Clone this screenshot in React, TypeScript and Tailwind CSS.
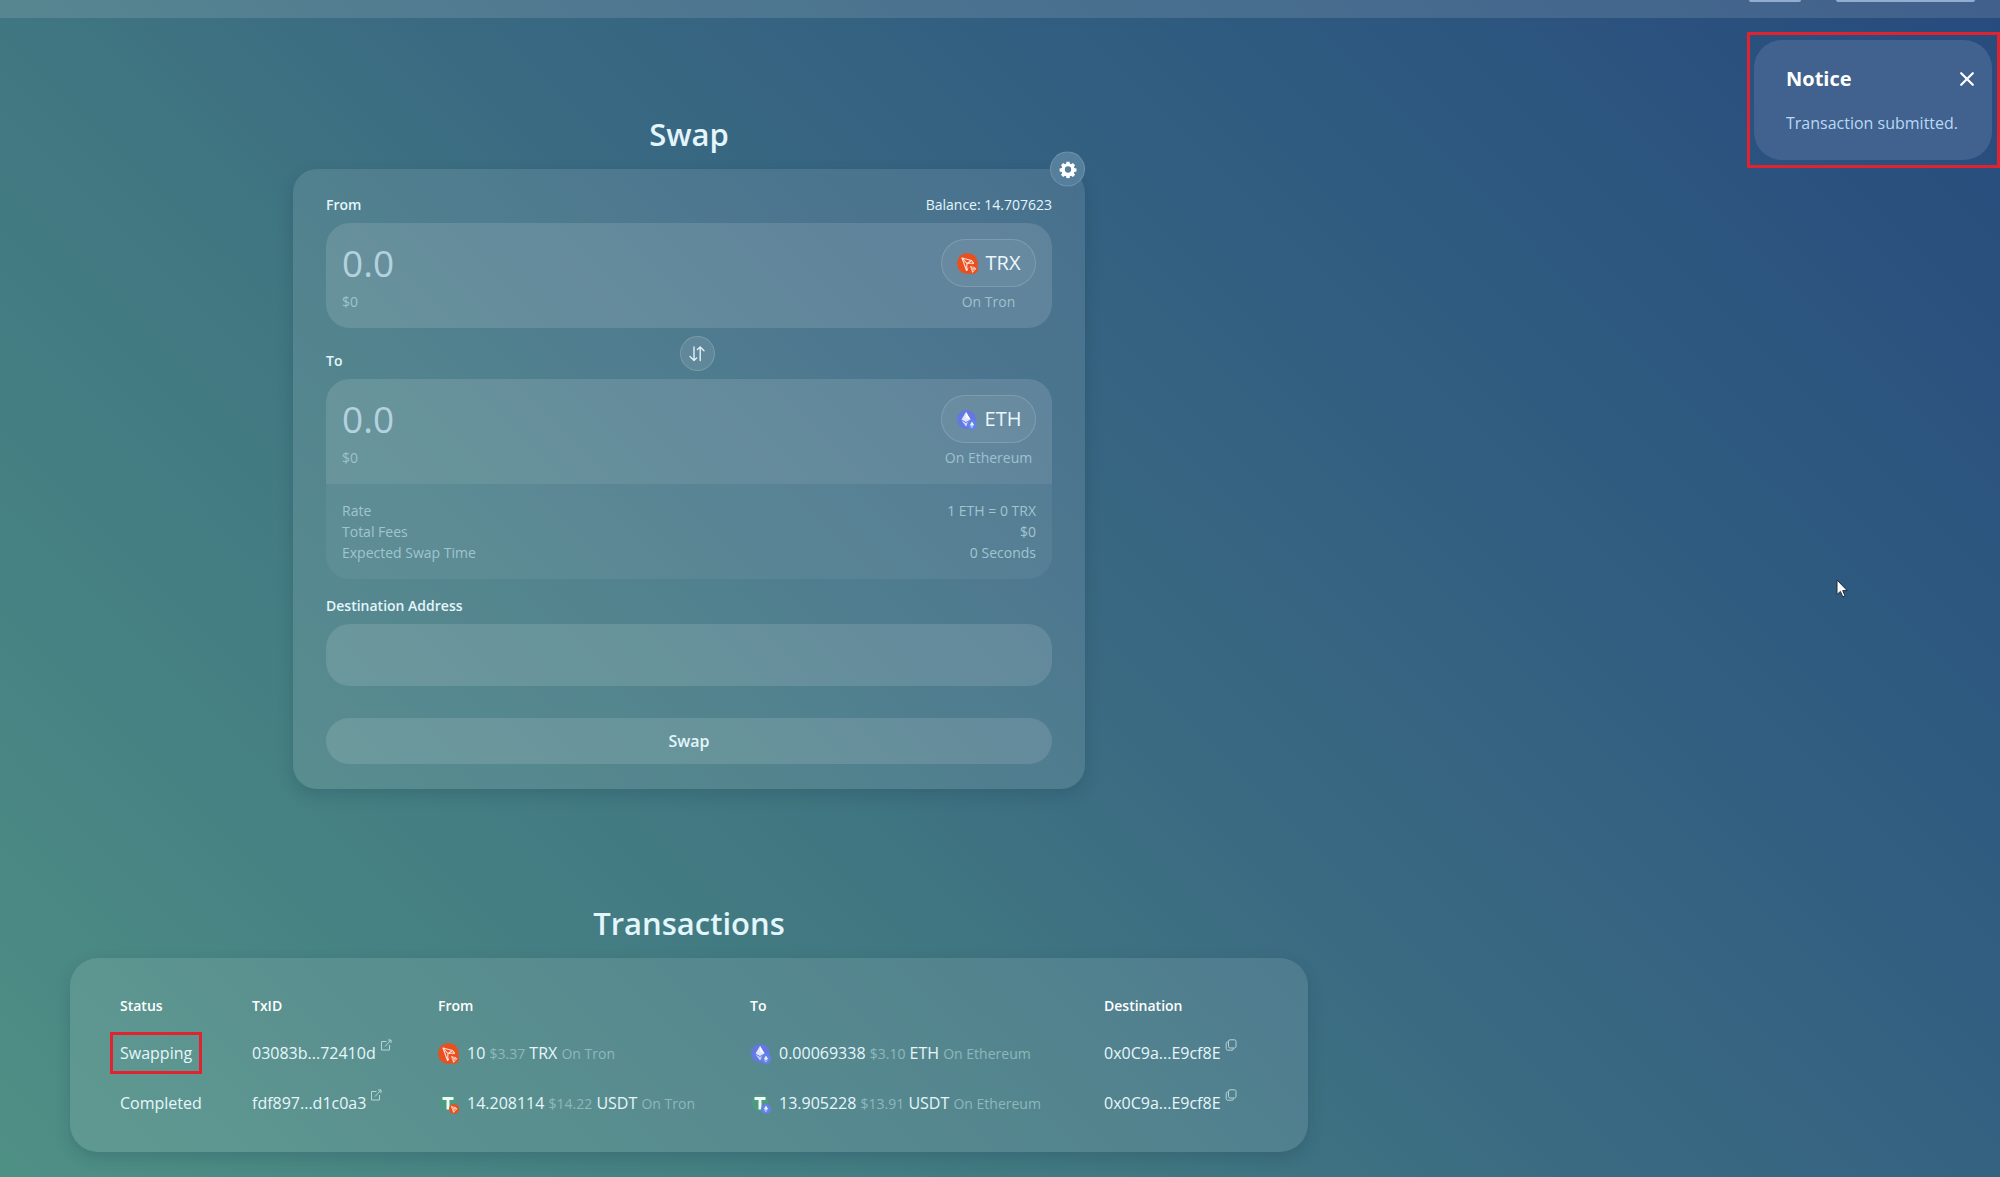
import React from "react";

const transactions = [
    {
        status: "Swapping",
        highlighted: true,
        txid: "03083b...72410d",
        from: { token: "TRX", chain: "Tron", amount: "10", usd: "$3.37" },
        to: { token: "ETH", chain: "Ethereum", amount: "0.00069338", usd: "$3.10" },
        destination: "0x0C9a...E9cf8E",
    },
    {
        status: "Completed",
        highlighted: false,
        txid: "fdf897...d1c0a3",
        from: { token: "USDT", chain: "Tron", amount: "14.208114", usd: "$14.22" },
        to: { token: "USDT", chain: "Ethereum", amount: "13.905228", usd: "$13.91" },
        destination: "0x0C9a...E9cf8E",
    },
];

const details = [
    { label: "Rate", value: "1 ETH = 0 TRX" },
    { label: "Total Fees", value: "$0" },
    { label: "Expected Swap Time", value: "0 Seconds" },
];

const TronMark = () => (
    <g fill="none" stroke="#ffe1d8" strokeLinejoin="round">
        <path d="M10 10 L29 15 L33 20 L19 35 Z" />
        <path d="M10 10 L20 21 L33 20 M20 21 L19 35 M20 21 L29 15" />
    </g>
);

const EtherMark = () => (
    <g>
        <path d="M20 6 L29 21 L20 26 L11 21 Z" fill="#dfe6ff" />
        <path d="M20 6 L29 21 L20 17 Z" fill="#ffffff" />
        <path d="M11 23 L20 28 L29 23 L20 35 Z" fill="#c9d5ff" />
    </g>
);

const TokenIcon = ({ token, chain }: { token: string; chain: string }) => (
    <svg viewBox="0 0 42 42" className="size-[21px] shrink-0" aria-hidden="true">
        {token === "TRX" && (
            <>
                <circle cx="21" cy="21" r="21" fill="#e9501f" />
                <g strokeWidth="2.2">
                    <TronMark />
                </g>
            </>
        )}
        {token === "ETH" && (
            <>
                <circle cx="21" cy="21" r="19" fill="#6478e2" />
                <EtherMark />
            </>
        )}
        {token === "USDT" && (
            <>
                <circle cx="20" cy="20" r="17" fill="#4d9a80" />
                <path d="M9 8 H31 V14 H23 V33 H17 V14 H9 Z" fill="#eefaf6" />
            </>
        )}
        <circle cx="32" cy="32" r="10" fill={chain === "Tron" ? "#e9501f" : "#6283ea"} />
        <g transform="translate(22.5 22.5) scale(0.46)" strokeWidth="3.4">
            {chain === "Tron" ? <TronMark /> : <EtherMark />}
        </g>
    </svg>
);

const GearIcon = () => (
    <svg viewBox="0 0 24 24" className="size-[18px]" fill="#ffffff" aria-hidden="true">
        <path
            fillRule="evenodd"
            d="M10 1.5h4l.6 2.9 1.5.6 2.5-1.6 2.8 2.8-1.6 2.5.6 1.4 2.9.6v3.9l-2.9.6-.6 1.5 1.6 2.4-2.8 2.8-2.5-1.6-1.5.6-.6 2.9h-4l-.6-2.9-1.4-.6-2.5 1.6-2.8-2.8 1.6-2.4-.6-1.5-2.9-.6v-3.9l2.9-.6.6-1.4-1.6-2.5 2.8-2.8L8 5l1.4-.6zM12 7.8a4.2 4.2 0 1 0 0 8.4 4.2 4.2 0 0 0 0-8.4z"
        />
    </svg>
);

const FlipIcon = () => (
    <svg
        viewBox="0 0 18 18"
        className="size-[18px]"
        fill="none"
        stroke="#e2f1f8"
        strokeWidth="1.4"
        strokeLinecap="round"
        strokeLinejoin="round"
        aria-hidden="true"
    >
        <path d="M6 2V15.5M2 11.5L6 15.5L8.6 13" />
        <path d="M12.2 15.5V2M9.4 4.6L12.2 2L16 5.8" />
    </svg>
);

const ExternalIcon = () => (
    <svg viewBox="0 0 12 12" className="size-3" fill="none" stroke="currentColor" aria-hidden="true">
        <path d="M6.5 2.5H1.5V11H9.5V6M5 7.5L11 1M8 1H11V4" />
    </svg>
);

const CopyIcon = () => (
    <svg viewBox="0 0 12 12" className="size-3" fill="none" stroke="currentColor" aria-hidden="true">
        <rect x="3.5" y="0.8" width="7.5" height="8.2" rx="1.6" />
        <path d="M3.5 3H2.6Q1.2 3 1.2 4.4V9.6Q1.2 11.2 2.8 11.2H7Q8.4 11.2 8.4 9.8V9" />
    </svg>
);

const TokenField = ({
    id,
    token,
    chain,
    className,
}: {
    id: string;
    token: string;
    chain: string;
    className: string;
}) => (
    <div className={`flex items-start justify-between bg-white/12 px-4 py-4 ${className}`}>
        <div className="flex min-w-0 flex-1 flex-col gap-1">
            <input
                id={id}
                type="text"
                inputMode="decimal"
                placeholder="0.0"
                className="h-12 w-full bg-transparent text-[37px] text-white outline-none placeholder:text-[#b3d2de]"
            />
            <span className="text-sm leading-[21px] text-[#9fc1ce]">$0</span>
        </div>
        <div className="flex flex-col items-center gap-1">
            <button
                type="button"
                className="flex h-12 w-[95px] items-center justify-center gap-2 rounded-full border border-white/15 bg-white/5 text-xl text-[#eaf8fd]"
            >
                <TokenIcon token={token} chain={chain} />
                {token}
            </button>
            <span className="text-sm leading-[21px] text-[#9fc1ce]">On {chain}</span>
        </div>
    </div>
);

const SwapCard = () => (
    <section className="flex w-full max-w-[792px] flex-col items-center">
        <h1 className="text-[31px] font-semibold leading-10 text-[#e2f6fc]">Swap</h1>
        <form className="relative mt-[15px] w-full rounded-3xl bg-white/10 px-[33px] py-[25px] shadow-[0_6px_16px_rgba(20,50,70,0.2)]">
            <button
                type="button"
                aria-label="Settings"
                className="absolute right-0 top-0 flex size-[35px] -translate-y-1/2 items-center justify-center rounded-full border border-white/15 bg-[#557f9c]"
            >
                <GearIcon />
            </button>

            <div className="mb-2 flex items-center justify-between text-sm leading-[21px] text-[#e2f6fc]">
                <label htmlFor="from-amount" className="font-semibold">
                    From
                </label>
                <span>Balance: 14.707623</span>
            </div>
            <TokenField id="from-amount" token="TRX" chain="Tron" className="rounded-3xl" />

            <div className="my-2 flex items-end justify-between">
                <label htmlFor="to-amount" className="text-sm font-semibold leading-[21px] text-[#e2f6fc]">
                    To
                </label>
                <button
                    type="button"
                    aria-label="Switch tokens"
                    className="flex size-[35px] items-center justify-center rounded-full border border-white/15 bg-white/10"
                >
                    <FlipIcon />
                </button>
                <span />
            </div>
            <TokenField id="to-amount" token="ETH" chain="Ethereum" className="rounded-t-3xl" />
            <dl className="rounded-b-3xl bg-white/5 p-4 text-sm leading-[21px] text-[#9fc6d0]">
                {details.map(({ label, value }) => (
                    <div key={label} className="flex justify-between">
                        <dt>{label}</dt>
                        <dd>{value}</dd>
                    </div>
                ))}
            </dl>

            <label
                htmlFor="destination"
                className="mb-2 mt-4 block text-sm font-semibold leading-[21px] text-[#e2f6fc]"
            >
                Destination Address
            </label>
            <input
                id="destination"
                type="text"
                className="h-[62px] w-full rounded-3xl bg-white/12 px-4 text-white outline-none"
            />
            <button
                type="button"
                className="mt-8 h-[46px] w-full rounded-3xl bg-white/12 font-semibold text-[#e2f6fc]"
            >
                Swap
            </button>
        </form>
    </section>
);

const TokenAmount = ({
    token,
    chain,
    amount,
    usd,
}: {
    token: string;
    chain: string;
    amount: string;
    usd: string;
}) => (
    <div className="flex items-center gap-2">
        <TokenIcon token={token} chain={chain} />
        <span>
            {amount} <span className="text-sm text-[#8fb8bd]">{usd}</span> {token}{" "}
            <span className="text-sm text-[#8fb8bd]">On {chain}</span>
        </span>
    </div>
);

const Transactions = () => (
    <section className="mt-[114px] flex w-full max-w-[1238px] flex-col items-center">
        <h2 className="text-[31px] font-semibold leading-10 text-[#e2f6fc]">Transactions</h2>
        <div className="mt-[15px] w-full rounded-[28px] bg-white/10 px-[50px] pb-6 pt-[26px] shadow-[0_6px_16px_rgba(20,50,70,0.2)]">
            <table className="w-full table-fixed text-left text-[#e6f7fb]">
                <thead>
                    <tr className="h-11 text-sm text-white">
                        <th className="w-[132px] font-semibold">Status</th>
                        <th className="w-[186px] font-semibold">TxID</th>
                        <th className="w-[312px] font-semibold">From</th>
                        <th className="w-[354px] font-semibold">To</th>
                        <th className="font-semibold">Destination</th>
                    </tr>
                </thead>
                <tbody>
                    {transactions.map((tx) => (
                        <tr key={tx.txid} className="h-[50px] whitespace-nowrap">
                            <td>
                                {tx.highlighted ? (
                                    <span className="inline-block leading-[22px] outline-[3px] outline-offset-[7px] outline-[#e0232e]">
                                        {tx.status}
                                    </span>
                                ) : (
                                    tx.status
                                )}
                            </td>
                            <td>
                                <a href="#" className="flex items-center gap-1">
                                    {tx.txid}
                                    <span className="mb-4 text-[#b5d5d8]">
                                        <ExternalIcon />
                                    </span>
                                </a>
                            </td>
                            <td>
                                <TokenAmount {...tx.from} />
                            </td>
                            <td>
                                <TokenAmount {...tx.to} />
                            </td>
                            <td>
                                <div className="flex items-center gap-1">
                                    {tx.destination}
                                    <button type="button" aria-label="Copy address" className="mb-4 text-[#b5d5d8]">
                                        <CopyIcon />
                                    </button>
                                </div>
                            </td>
                        </tr>
                    ))}
                </tbody>
            </table>
        </div>
    </section>
);

const Notice = () => (
    <div className="mt-[14px] w-[253px] border-[3px] border-[#e0232e] py-[5px] pl-1 pr-[5px]">
        <div role="status" className="rounded-[28px] bg-[#41628e] pb-[25px] pl-8 pr-[18px] pt-[25px]">
            <div className="flex items-center justify-between">
                <h3 className="text-xl font-bold leading-7 text-white">Notice</h3>
                <button type="button" aria-label="Close">
                    <svg
                        viewBox="0 0 14 14"
                        className="size-[14px]"
                        stroke="#ffffff"
                        strokeWidth="2.2"
                        strokeLinecap="round"
                        aria-hidden="true"
                    >
                        <path d="M1.2 1.2L12.8 12.8M12.8 1.2L1.2 12.8" />
                    </svg>
                </button>
            </div>
            <p className="mt-[18px] whitespace-nowrap leading-6 text-[#b9d9f5]">Transaction submitted.</p>
        </div>
    </div>
);

const App = () => {
    return (
        <div className="flex min-h-screen flex-col bg-[linear-gradient(45deg,#4f9085_0%,#468183_20%,#407681_37%,#3a6a82_50%,#305c80_72%,#274b7d_100%)] font-['Open_Sans',sans-serif] text-base">
            <header className="flex h-[18px] items-start justify-end gap-[35px] bg-white/12 pr-[25px]">
                <span className="h-[2px] w-[52px] rounded-b-sm bg-[#93add0]" />
                <span className="h-[2px] w-[139px] rounded-b-sm bg-[#93add0]" />
            </header>
            <div className="flex flex-1">
                <main className="flex min-w-0 flex-1 flex-col items-center pb-6 pt-24">
                    <SwapCard />
                    <Transactions />
                </main>
                <aside className="relative flex w-[622px] flex-col items-end">
                    <Notice />
                    <svg
                        viewBox="0 0 12 19"
                        className="absolute left-[458px] top-[561px] h-[19px] w-3"
                        fill="#ffffff"
                        stroke="#1c2c40"
                        aria-hidden="true"
                    >
                        <path d="M1 1V15.5L4.4 12.4L6.8 17.8L9 16.8L6.7 11.6H11.2Z" />
                    </svg>
                </aside>
            </div>
        </div>
    );
};

export default App;
